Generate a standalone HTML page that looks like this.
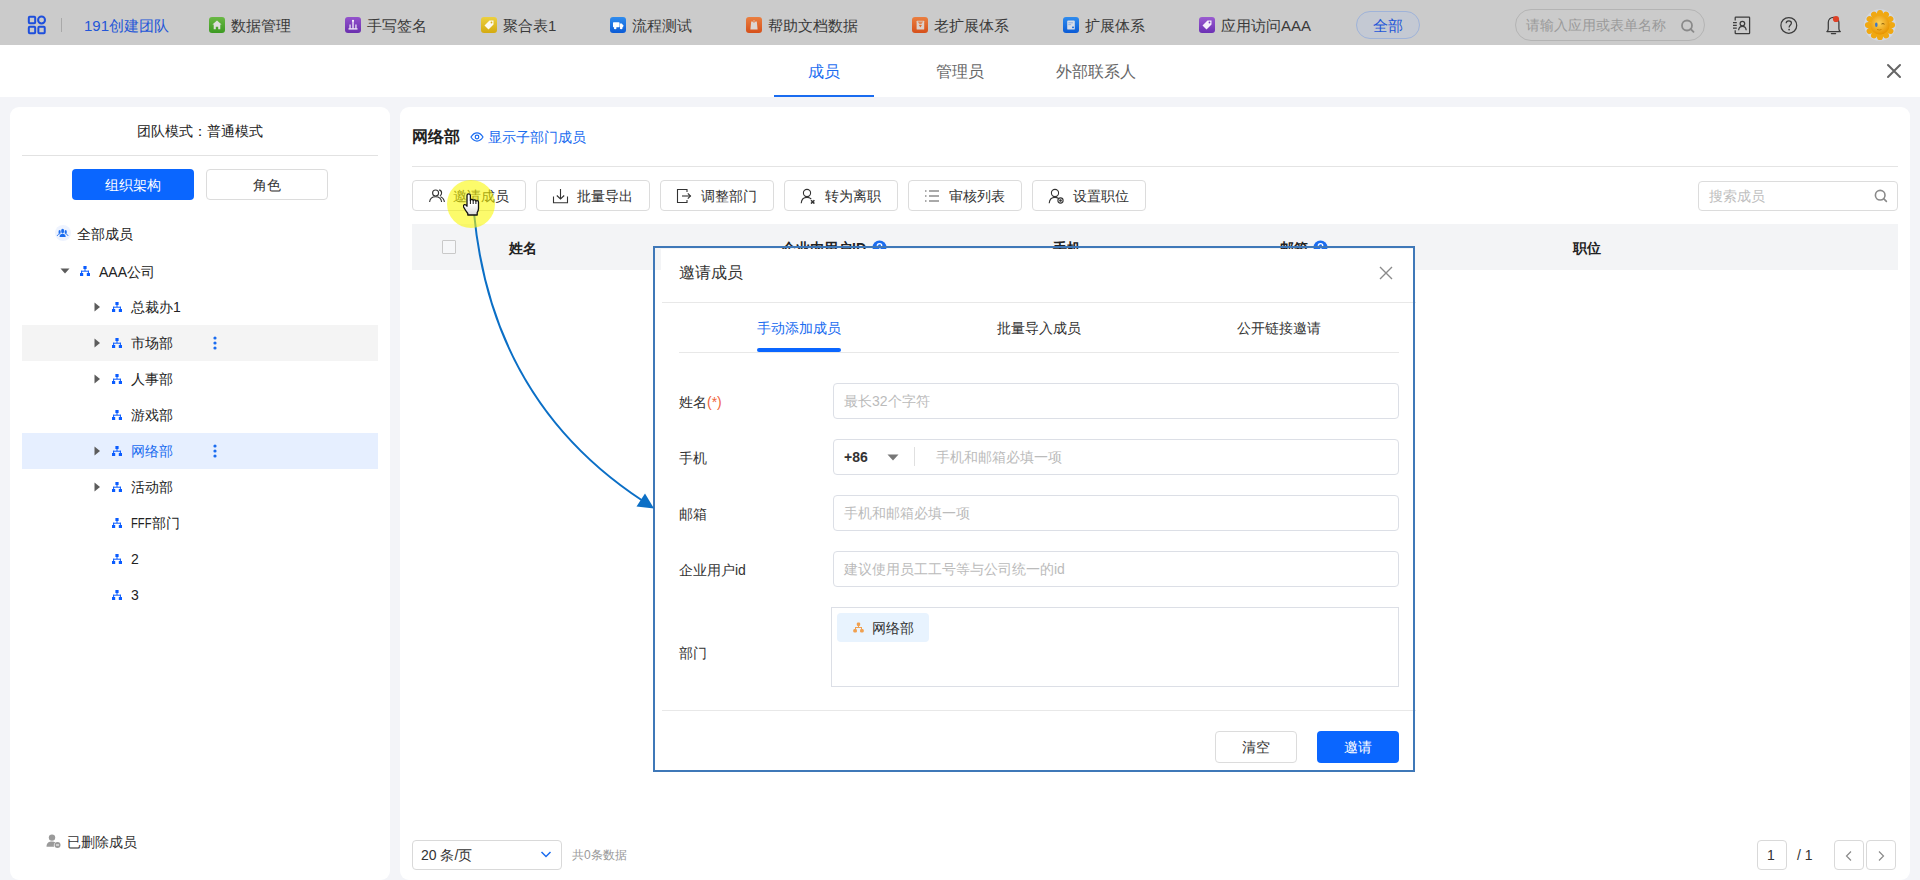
<!DOCTYPE html>
<html><head><meta charset="utf-8">
<style>
*{box-sizing:border-box;margin:0;padding:0}
html,body{width:1920px;height:880px;overflow:hidden}
body{position:relative;background:#f3f4f8;font-family:"Liberation Sans",sans-serif;font-size:14px;color:#333}
.a{position:absolute;white-space:nowrap}
.t{position:absolute;white-space:nowrap;line-height:20px;height:20px}
#hdr{position:absolute;left:0;top:0;width:1920px;height:45px;background:#cbcbcb}
#band{position:absolute;left:0;top:45px;width:1920px;height:52px;background:#fff}
.appicon{position:absolute;top:17px;width:16px;height:16px;border-radius:3px}
.apptxt{position:absolute;top:16px;font-size:15px;line-height:20px;color:#3a3a3a}
.panel{position:absolute;background:#fff;border-radius:9px}
.btn{position:absolute;border:1px solid #dcdcdc;border-radius:4px;background:#fff}
.tree{position:absolute;font-size:14px;color:#222;line-height:20px}
.inp{position:absolute;border:1px solid #dcdfe6;border-radius:4px;background:#fff}
.ph{position:absolute;color:#bbb;font-size:14px;line-height:20px}
.lbl{position:absolute;color:#333;font-size:14px;line-height:20px}
</style></head><body>

<!-- HEADER -->
<div id="hdr"></div>
<svg class="a" style="left:26.5px;top:15px" width="20" height="20" viewBox="0 0 22 22">
  <g fill="none" stroke="#1e4fdc" stroke-width="2.2">
    <rect x="2" y="2" width="7" height="7" rx="1"/>
    <circle cx="16" cy="5.5" r="3.8"/>
    <rect x="2" y="13" width="7" height="7" rx="1"/>
    <rect x="12.5" y="13" width="7" height="7" rx="1"/>
  </g>
</svg>
<div class="a" style="left:61px;top:18px;width:1px;height:14px;background:#a9a9a9"></div>
<div class="apptxt" style="left:84px;color:#2356d8">191创建团队</div>

<svg class="a" style="left:209px;top:17px" width="16" height="16" viewBox="0 0 16 16"><defs><linearGradient id="g0" x1="0" y1="0" x2="0" y2="1"><stop offset="0" stop-color="#6ab845"/><stop offset="1" stop-color="#3c9a22"/></linearGradient></defs><rect width="16" height="16" rx="3" fill="url(#g0)"/><path d="M8 3.4 L12.6 7.6 L11.3 7.6 L11.3 12.2 L9.2 12.2 L9.2 9.8 L6.8 9.8 L6.8 12.2 L4.7 12.2 L4.7 7.6 L3.4 7.6 Z" fill="#dedede"/></svg>
<svg class="a" style="left:345px;top:17px" width="16" height="16" viewBox="0 0 16 16"><defs><linearGradient id="g1" x1="0" y1="0" x2="0" y2="1"><stop offset="0" stop-color="#9352cc"/><stop offset="1" stop-color="#6a2fae"/></linearGradient></defs><rect width="16" height="16" rx="3" fill="url(#g1)"/><g fill="#fff"><rect x="7.4" y="3.5" width="1.2" height="8"/><rect x="4.5" y="7.5" width="1.1" height="4"/><rect x="10.4" y="7.5" width="1.1" height="4"/><rect x="3.5" y="11.3" width="9" height="1.2"/><circle cx="8" cy="3.8" r="1"/></g></svg>
<svg class="a" style="left:481px;top:17px" width="16" height="16" viewBox="0 0 16 16"><defs><linearGradient id="g2" x1="0" y1="0" x2="0" y2="1"><stop offset="0" stop-color="#ecd040"/><stop offset="1" stop-color="#d4aa10"/></linearGradient></defs><rect width="16" height="16" rx="3" fill="url(#g2)"/><path d="M3.5 8.5 L8.5 3.5 L12.5 3.5 L12.5 7.5 L7.5 12.5 Z" fill="#fff" opacity="0.92"/><circle cx="10.5" cy="5.5" r="0.9" fill="#d8b020"/></svg>
<svg class="a" style="left:610px;top:17px" width="16" height="16" viewBox="0 0 16 16"><defs><linearGradient id="g3" x1="0" y1="0" x2="0" y2="1"><stop offset="0" stop-color="#2f8cee"/><stop offset="1" stop-color="#0b5bd6"/></linearGradient></defs><rect width="16" height="16" rx="3" fill="url(#g3)"/><g fill="#fff"><rect x="3" y="5.2" width="6.5" height="5" rx="0.6"/><path d="M9.8 6.5 L11.8 6.5 L13.2 8.3 L13.2 10.2 L9.8 10.2 Z"/><circle cx="5.2" cy="11" r="1.3"/><circle cx="11.2" cy="11" r="1.3"/></g></svg>
<svg class="a" style="left:746px;top:17px" width="16" height="16" viewBox="0 0 16 16"><defs><linearGradient id="g4" x1="0" y1="0" x2="0" y2="1"><stop offset="0" stop-color="#ea7f40"/><stop offset="1" stop-color="#d6501a"/></linearGradient></defs><rect width="16" height="16" rx="3" fill="url(#g4)"/><path d="M5.2 4.6 L6.5 4.6 C6.8 5.3 7.3 5.6 8 5.6 C8.7 5.6 9.2 5.3 9.5 4.6 L10.8 4.6 L11.6 12.4 L4.4 12.4 Z" fill="#dcd6d2"/><circle cx="8" cy="3.9" r="0.7" fill="#dcd6d2"/></svg>
<svg class="a" style="left:912px;top:17px" width="16" height="16" viewBox="0 0 16 16"><defs><linearGradient id="g5" x1="0" y1="0" x2="0" y2="1"><stop offset="0" stop-color="#ea7f40"/><stop offset="1" stop-color="#d6501a"/></linearGradient></defs><rect width="16" height="16" rx="3" fill="url(#g5)"/><rect x="4.6" y="3.8" width="7.6" height="8.6" rx="0.5" fill="#dcd2cc"/><path d="M5.6 4.4 L11.2 4.4 L9.2 7.2 L7.6 7.2 Z" fill="#e08a5a"/><path d="M6.9 8 L9.9 8 L8.4 10.6 Z" fill="#e06a2c"/></svg>
<svg class="a" style="left:1063px;top:17px" width="16" height="16" viewBox="0 0 16 16"><defs><linearGradient id="g6" x1="0" y1="0" x2="0" y2="1"><stop offset="0" stop-color="#2f8cee"/><stop offset="1" stop-color="#0b5bd6"/></linearGradient></defs><rect width="16" height="16" rx="3" fill="url(#g6)"/><rect x="4.2" y="3.6" width="7.6" height="9" rx="0.9" fill="#d8dde6"/><g fill="#8fb0e0"><rect x="5.3" y="5.3" width="4.8" height="1"/><rect x="5.3" y="7.2" width="2.8" height="0.9"/></g><rect x="9" y="9.6" width="2" height="1.5" fill="#2e7ae0"/></svg>
<svg class="a" style="left:1199px;top:17px" width="16" height="16" viewBox="0 0 16 16"><defs><linearGradient id="g7" x1="0" y1="0" x2="0" y2="1"><stop offset="0" stop-color="#9a5cd0"/><stop offset="1" stop-color="#6b30b4"/></linearGradient></defs><rect width="16" height="16" rx="3" fill="url(#g7)"/><path d="M3.5 8.5 L8.5 3.5 L12.5 3.5 L12.5 7.5 L7.5 12.5 Z" fill="#fff" opacity="0.92"/><circle cx="10.5" cy="5.5" r="0.9" fill="#7a40c0"/></svg>
<div class="apptxt" style="left:231px">数据管理</div>
<div class="apptxt" style="left:367px">手写签名</div>
<div class="apptxt" style="left:503px">聚合表1</div>
<div class="apptxt" style="left:632px">流程测试</div>
<div class="apptxt" style="left:768px">帮助文档数据</div>
<div class="apptxt" style="left:934px">老扩展体系</div>
<div class="apptxt" style="left:1085px">扩展体系</div>
<div class="apptxt" style="left:1221px">应用访问AAA</div>

<div class="a" style="left:1356px;top:11px;width:64px;height:28px;border-radius:14px;background:#c4c9d3;border:1px solid #9fb3d9"></div>
<div class="apptxt" style="left:1373px;color:#2356d8">全部</div>

<div class="a" style="left:1515px;top:9px;width:190px;height:32px;border-radius:16px;border:1px solid #b4b4b4"></div>
<div class="a" style="left:1526px;top:15px;font-size:14px;line-height:20px;color:#9a9a9a">请输入应用或表单名称</div>


<svg class="a" style="left:1680px;top:19px" width="16" height="14" viewBox="0 0 16 14">
  <circle cx="7" cy="6.5" r="5" fill="none" stroke="#8a8a8a" stroke-width="1.8"/>
  <line x1="10.6" y1="10" x2="13.5" y2="12.8" stroke="#8a8a8a" stroke-width="1.8" stroke-linecap="round"/>
</svg>
<!-- contacts icon -->
<svg class="a" style="left:1728px;top:12px" width="24" height="24" viewBox="0 0 24 24">
<g fill="none" stroke="#3c3c3c" stroke-width="1.25">
<path d="M7.2 8.6 L7.2 5.8 Q7.2 5.1 7.9 5.1 L21 5.1 Q21.6 5.1 21.6 5.8 L21.6 20.9 Q21.6 21.6 21 21.6 L7.9 21.6 Q7.2 21.6 7.2 20.9 L7.2 18.2"/>
<path d="M5 10.6 L8.8 10.6 M5 13.3 L8.8 13.3 M5 16 L8.8 16"/>
<circle cx="14.4" cy="11.6" r="2.3"/>
<path d="M10.6 18.2 C10.9 15.5 12.4 14.4 14.4 14.4 C16.4 14.4 17.9 15.5 18.2 18.2"/>
</g></svg>
<!-- help -->
<svg class="a" style="left:1776px;top:12px" width="26" height="26" viewBox="0 0 26 26">
<circle cx="12.8" cy="13.4" r="7.9" fill="none" stroke="#3c3c3c" stroke-width="1.25"/>
<path d="M10.2 11.2 C10.2 9.7 11.3 8.9 12.8 8.9 C14.3 8.9 15.4 9.8 15.4 11.1 C15.4 12.9 13.1 13.2 13.1 15.5" fill="none" stroke="#3c3c3c" stroke-width="1.25"/>
<circle cx="13.1" cy="17.6" r="0.85" fill="#3c3c3c"/>
</svg>
<!-- bell -->
<svg class="a" style="left:1820px;top:10px" width="24" height="26" viewBox="0 0 24 26">
<g fill="none" stroke="#3c3c3c" stroke-width="1.25" stroke-linecap="round">
<path d="M6.9 21.6 L20.3 21.6"/>
<path d="M7.4 21.2 C8 20.4 8.3 19.6 8.3 18.4 L8.3 12.6 C8.3 9.4 10.6 7.4 13.6 7.4 C16.6 7.4 18.9 9.4 18.9 12.6 L18.9 18.4 C18.9 19.6 19.2 20.4 19.8 21.2"/>
<path d="M11.4 23.6 L15.6 23.6"/>
</g>
<circle cx="16" cy="9" r="3.1" fill="#de4228"/>
</svg>
<!-- avatar -->
<svg class="a" style="left:1864px;top:9px" width="32" height="32" viewBox="0 0 32 32">
<defs><radialGradient id="face" cx="0.45" cy="0.4" r="0.6"><stop offset="0" stop-color="#fcd25a"/><stop offset="1" stop-color="#e89400"/></radialGradient></defs>
<circle cx="16" cy="16" r="15.8" fill="#d3d8e2"/>
<g fill="#f0a812"><ellipse cx="27.20" cy="16.00" rx="3.9" ry="3.1" transform="rotate(0 27.20 16.00)"/><ellipse cx="25.70" cy="21.60" rx="3.9" ry="3.1" transform="rotate(30 25.70 21.60)"/><ellipse cx="21.60" cy="25.70" rx="3.9" ry="3.1" transform="rotate(60 21.60 25.70)"/><ellipse cx="16.00" cy="27.20" rx="3.9" ry="3.1" transform="rotate(90 16.00 27.20)"/><ellipse cx="10.40" cy="25.70" rx="3.9" ry="3.1" transform="rotate(120 10.40 25.70)"/><ellipse cx="6.30" cy="21.60" rx="3.9" ry="3.1" transform="rotate(150 6.30 21.60)"/><ellipse cx="4.80" cy="16.00" rx="3.9" ry="3.1" transform="rotate(180 4.80 16.00)"/><ellipse cx="6.30" cy="10.40" rx="3.9" ry="3.1" transform="rotate(210 6.30 10.40)"/><ellipse cx="10.40" cy="6.30" rx="3.9" ry="3.1" transform="rotate(240 10.40 6.30)"/><ellipse cx="16.00" cy="4.80" rx="3.9" ry="3.1" transform="rotate(270 16.00 4.80)"/><ellipse cx="21.60" cy="6.30" rx="3.9" ry="3.1" transform="rotate(300 21.60 6.30)"/><ellipse cx="25.70" cy="10.40" rx="3.9" ry="3.1" transform="rotate(330 25.70 10.40)"/></g>
<circle cx="16" cy="16" r="9.5" fill="url(#face)"/>
<ellipse cx="12.3" cy="15.8" rx="1.3" ry="2.2" fill="#3d78c8"/>
<path d="M17.5 15 Q19 14 20.5 15.2" stroke="#7a5000" stroke-width="0.9" fill="none"/>
<path d="M13 20.5 Q15.5 21.5 17.5 20.5" stroke="#c07a00" stroke-width="0.8" fill="none"/>
</svg>

<!-- BAND -->
<div id="band"></div>
<div class="a" style="left:808px;top:61px;font-size:16px;line-height:22px;color:#1a6cf0">成员</div>
<div class="a" style="left:774px;top:95px;width:100px;height:2px;background:#1a6cf0"></div>
<div class="a" style="left:936px;top:61px;font-size:16px;line-height:22px;color:#666">管理员</div>
<div class="a" style="left:1056px;top:61px;font-size:16px;line-height:22px;color:#666">外部联系人</div>
<svg class="a" style="left:1886px;top:63px" width="16" height="16" viewBox="0 0 16 16">
  <path d="M2 2 L14 14 M14 2 L2 14" stroke="#666" stroke-width="2" stroke-linecap="round"/>
</svg>


<!-- LEFT PANEL -->
<div class="panel" style="left:10px;top:107px;width:380px;height:773px"></div>
<div class="t" style="left:137px;top:121px;color:#222">团队模式：普通模式</div>
<div class="a" style="left:22px;top:155px;width:356px;height:1px;background:#e2e2e2"></div>
<div class="a" style="left:72px;top:169px;width:122px;height:31px;border-radius:4px;background:#0a66ff"></div>
<div class="t" style="left:105px;top:175px;color:#fff">组织架构</div>
<div class="btn" style="left:206px;top:169px;width:122px;height:31px"></div>
<div class="t" style="left:253px;top:175px;color:#333">角色</div>

<svg class="a" style="left:55px;top:225px" width="16" height="16" viewBox="0 0 16 16">
<circle cx="8" cy="8" r="8" fill="#eef3fe"/>
<g fill="#1a6cf0"><ellipse cx="7.6" cy="6.1" rx="1.5" ry="2.3"/><path d="M4.5 11.9 C4.6 9.6 5.9 8.7 7.6 8.7 C9.3 8.7 10.6 9.6 10.7 11.9 Z"/>
<ellipse cx="4.6" cy="6.9" rx="1.1" ry="1.9"/><ellipse cx="10.7" cy="6.9" rx="1.1" ry="1.9"/></g>
<g fill="none" stroke="#1a6cf0" stroke-width="1" stroke-linecap="round"><path d="M2.4 10.4 C2.8 9.5 3.5 9.1 4.3 9"/><path d="M12.9 10.4 C12.5 9.5 11.8 9.1 11 9"/></g>
</svg>
<div class="tree" style="left:77px;top:224px">全部成员</div>
<svg class="a" style="left:60px;top:268px" width="10" height="6" viewBox="0 0 10 6"><path d="M0.5 0.5 L9.5 0.5 L5 5.5 Z" fill="#5c5c5c"/></svg><svg class="a" style="left:80px;top:266px" width="10" height="10" viewBox="0 0 10 10"><g fill="#0a5cff"><rect x="3.4" y="0" width="3.2" height="3"/><rect x="0" y="7" width="3.2" height="3"/><rect x="6.8" y="7" width="3.2" height="3"/><rect x="4.5" y="3" width="1" height="2"/><rect x="1.1" y="4.7" width="7.8" height="1"/><rect x="1.1" y="4.7" width="1" height="2.4"/><rect x="7.9" y="4.7" width="1" height="2.4"/></g></svg>
<div class="tree" style="left:99px;top:262px">AAA公司</div>
<div class="a" style="left:22px;top:325px;width:356px;height:36px;background:#f4f4f4"></div>
<div class="a" style="left:22px;top:433px;width:356px;height:36px;background:#e6efff"></div>
<svg class="a" style="left:94px;top:302px" width="7" height="10" viewBox="0 0 7 10"><path d="M0.5 0.5 L6 5 L0.5 9.5 Z" fill="#5c5c5c"/></svg><svg class="a" style="left:112px;top:302px" width="10" height="10" viewBox="0 0 10 10"><g fill="#0a5cff"><rect x="3.4" y="0" width="3.2" height="3"/><rect x="0" y="7" width="3.2" height="3"/><rect x="6.8" y="7" width="3.2" height="3"/><rect x="4.5" y="3" width="1" height="2"/><rect x="1.1" y="4.7" width="7.8" height="1"/><rect x="1.1" y="4.7" width="1" height="2.4"/><rect x="7.9" y="4.7" width="1" height="2.4"/></g></svg><div class="tree" style="left:131px;top:297px;color:#222">总裁办1</div>
<svg class="a" style="left:94px;top:338px" width="7" height="10" viewBox="0 0 7 10"><path d="M0.5 0.5 L6 5 L0.5 9.5 Z" fill="#5c5c5c"/></svg><svg class="a" style="left:112px;top:338px" width="10" height="10" viewBox="0 0 10 10"><g fill="#0a5cff"><rect x="3.4" y="0" width="3.2" height="3"/><rect x="0" y="7" width="3.2" height="3"/><rect x="6.8" y="7" width="3.2" height="3"/><rect x="4.5" y="3" width="1" height="2"/><rect x="1.1" y="4.7" width="7.8" height="1"/><rect x="1.1" y="4.7" width="1" height="2.4"/><rect x="7.9" y="4.7" width="1" height="2.4"/></g></svg><div class="tree" style="left:131px;top:333px;color:#222">市场部</div>
<svg class="a" style="left:213px;top:336px" width="4" height="14" viewBox="0 0 4 14"><g fill="#1a6cf0"><circle cx="2" cy="2" r="1.6"/><circle cx="2" cy="7" r="1.6"/><circle cx="2" cy="12" r="1.6"/></g></svg><svg class="a" style="left:94px;top:374px" width="7" height="10" viewBox="0 0 7 10"><path d="M0.5 0.5 L6 5 L0.5 9.5 Z" fill="#5c5c5c"/></svg><svg class="a" style="left:112px;top:374px" width="10" height="10" viewBox="0 0 10 10"><g fill="#0a5cff"><rect x="3.4" y="0" width="3.2" height="3"/><rect x="0" y="7" width="3.2" height="3"/><rect x="6.8" y="7" width="3.2" height="3"/><rect x="4.5" y="3" width="1" height="2"/><rect x="1.1" y="4.7" width="7.8" height="1"/><rect x="1.1" y="4.7" width="1" height="2.4"/><rect x="7.9" y="4.7" width="1" height="2.4"/></g></svg><div class="tree" style="left:131px;top:369px;color:#222">人事部</div>
<svg class="a" style="left:112px;top:410px" width="10" height="10" viewBox="0 0 10 10"><g fill="#0a5cff"><rect x="3.4" y="0" width="3.2" height="3"/><rect x="0" y="7" width="3.2" height="3"/><rect x="6.8" y="7" width="3.2" height="3"/><rect x="4.5" y="3" width="1" height="2"/><rect x="1.1" y="4.7" width="7.8" height="1"/><rect x="1.1" y="4.7" width="1" height="2.4"/><rect x="7.9" y="4.7" width="1" height="2.4"/></g></svg><div class="tree" style="left:131px;top:405px;color:#222">游戏部</div>
<svg class="a" style="left:94px;top:446px" width="7" height="10" viewBox="0 0 7 10"><path d="M0.5 0.5 L6 5 L0.5 9.5 Z" fill="#5c5c5c"/></svg><svg class="a" style="left:112px;top:446px" width="10" height="10" viewBox="0 0 10 10"><g fill="#0a5cff"><rect x="3.4" y="0" width="3.2" height="3"/><rect x="0" y="7" width="3.2" height="3"/><rect x="6.8" y="7" width="3.2" height="3"/><rect x="4.5" y="3" width="1" height="2"/><rect x="1.1" y="4.7" width="7.8" height="1"/><rect x="1.1" y="4.7" width="1" height="2.4"/><rect x="7.9" y="4.7" width="1" height="2.4"/></g></svg><div class="tree" style="left:131px;top:441px;color:#1a6cf0">网络部</div>
<svg class="a" style="left:213px;top:444px" width="4" height="14" viewBox="0 0 4 14"><g fill="#1a6cf0"><circle cx="2" cy="2" r="1.6"/><circle cx="2" cy="7" r="1.6"/><circle cx="2" cy="12" r="1.6"/></g></svg><svg class="a" style="left:94px;top:482px" width="7" height="10" viewBox="0 0 7 10"><path d="M0.5 0.5 L6 5 L0.5 9.5 Z" fill="#5c5c5c"/></svg><svg class="a" style="left:112px;top:482px" width="10" height="10" viewBox="0 0 10 10"><g fill="#0a5cff"><rect x="3.4" y="0" width="3.2" height="3"/><rect x="0" y="7" width="3.2" height="3"/><rect x="6.8" y="7" width="3.2" height="3"/><rect x="4.5" y="3" width="1" height="2"/><rect x="1.1" y="4.7" width="7.8" height="1"/><rect x="1.1" y="4.7" width="1" height="2.4"/><rect x="7.9" y="4.7" width="1" height="2.4"/></g></svg><div class="tree" style="left:131px;top:477px;color:#222">活动部</div>
<svg class="a" style="left:112px;top:518px" width="10" height="10" viewBox="0 0 10 10"><g fill="#0a5cff"><rect x="3.4" y="0" width="3.2" height="3"/><rect x="0" y="7" width="3.2" height="3"/><rect x="6.8" y="7" width="3.2" height="3"/><rect x="4.5" y="3" width="1" height="2"/><rect x="1.1" y="4.7" width="7.8" height="1"/><rect x="1.1" y="4.7" width="1" height="2.4"/><rect x="7.9" y="4.7" width="1" height="2.4"/></g></svg><div class="tree" style="left:131px;top:513px;color:#222"><span style="display:inline-block;width:21px;vertical-align:top"><span style="display:inline-block;transform:scaleX(0.8);transform-origin:0 0">FFF</span></span>部门</div>
<svg class="a" style="left:112px;top:554px" width="10" height="10" viewBox="0 0 10 10"><g fill="#0a5cff"><rect x="3.4" y="0" width="3.2" height="3"/><rect x="0" y="7" width="3.2" height="3"/><rect x="6.8" y="7" width="3.2" height="3"/><rect x="4.5" y="3" width="1" height="2"/><rect x="1.1" y="4.7" width="7.8" height="1"/><rect x="1.1" y="4.7" width="1" height="2.4"/><rect x="7.9" y="4.7" width="1" height="2.4"/></g></svg><div class="tree" style="left:131px;top:549px;color:#222">2</div>
<svg class="a" style="left:112px;top:590px" width="10" height="10" viewBox="0 0 10 10"><g fill="#0a5cff"><rect x="3.4" y="0" width="3.2" height="3"/><rect x="0" y="7" width="3.2" height="3"/><rect x="6.8" y="7" width="3.2" height="3"/><rect x="4.5" y="3" width="1" height="2"/><rect x="1.1" y="4.7" width="7.8" height="1"/><rect x="1.1" y="4.7" width="1" height="2.4"/><rect x="7.9" y="4.7" width="1" height="2.4"/></g></svg><div class="tree" style="left:131px;top:585px;color:#222">3</div>

<svg class="a" style="left:46px;top:834px" width="15" height="14" viewBox="0 0 15 14">
<g fill="#9a9a9a"><circle cx="6" cy="3.6" r="3.2"/><path d="M0.5 12.8 C0.8 8.6 3 7.6 6 7.6 C7.5 7.6 8.6 7.9 9.3 8.4 C8.2 9.2 7.8 10.3 7.8 11.3 C7.8 11.9 7.9 12.4 8.2 12.8 Z"/>
<circle cx="11.5" cy="11" r="3"/></g><rect x="10" y="10.5" width="3" height="1" fill="#fff"/>
</svg>
<div class="tree" style="left:67px;top:832px;color:#333">已删除成员</div>


<!-- RIGHT PANEL -->
<div class="panel" style="left:400px;top:107px;width:1510px;height:773px"></div>
<div class="a" style="left:412px;top:126px;font-size:16px;line-height:22px;color:#222;font-weight:bold">网络部</div>
<svg class="a" style="left:470px;top:132px" width="14" height="10" viewBox="0 0 14 10">
<path d="M1 5 C3 1.8 5 0.9 7 0.9 C9 0.9 11 1.8 13 5 C11 8.2 9 9.1 7 9.1 C5 9.1 3 8.2 1 5 Z" fill="none" stroke="#1a6cf0" stroke-width="1.2"/>
<circle cx="7" cy="5" r="1.8" fill="none" stroke="#1a6cf0" stroke-width="1.2"/></svg>
<div class="t" style="left:488px;top:127px;color:#1a6cf0">显示子部门成员</div>
<div class="a" style="left:412px;top:166px;width:1486px;height:1px;background:#e4e4e4"></div>
<div class="btn" style="left:412px;top:180px;width:114px;height:31px"></div>
<svg class="a" style="left:428px;top:188px" width="17" height="16" viewBox="0 0 17 16"><g fill="none" stroke="#333" stroke-width="1.1"><circle cx="7.6" cy="5" r="3"/><path d="M1.6 14 C1.9 10.6 4.2 8.8 7.6 8.8 C11 8.8 13.3 10.6 13.6 14"/><path d="M11.2 1.9 C12.6 2.3 13.6 3.5 13.6 5 C13.6 6.3 12.9 7.3 11.9 7.8"/><path d="M12.5 8.7 C14.6 9.5 16.1 11.4 16.4 14"/></g></svg>
<div class="t" style="left:453px;top:186px;color:#333">邀请成员</div>
<div class="btn" style="left:536px;top:180px;width:114px;height:31px"></div>
<svg class="a" style="left:552px;top:188px" width="17" height="16" viewBox="0 0 17 16"><g fill="none" stroke="#333" stroke-width="1.1"><path d="M1.5 8.5 L1.5 14.8 L15.5 14.8 L15.5 8.5"/><path d="M8.5 1 L8.5 11"/><path d="M4.8 7.5 L8.5 11 L12.2 7.5"/></g></svg>
<div class="t" style="left:577px;top:186px;color:#333">批量导出</div>
<div class="btn" style="left:660px;top:180px;width:114px;height:31px"></div>
<svg class="a" style="left:676px;top:188px" width="17" height="16" viewBox="0 0 17 16"><g fill="none" stroke="#333" stroke-width="1.1"><path d="M11 4 L11 1.5 L1.5 1.5 L1.5 14.5 L11 14.5 L11 12"/><path d="M6 8 L14.5 8"/><path d="M11.8 5.3 L14.5 8 L11.8 10.7"/></g></svg>
<div class="t" style="left:701px;top:186px;color:#333">调整部门</div>
<div class="btn" style="left:784px;top:180px;width:114px;height:31px"></div>
<svg class="a" style="left:800px;top:188px" width="17" height="16" viewBox="0 0 17 16"><g fill="none" stroke="#333" stroke-width="1.1"><circle cx="7" cy="5" r="3.6"/><path d="M1.2 15.2 C1.6 11 4 9.4 7 9.4 C8.8 9.4 10.2 10 11.2 11"/><path d="M11 12.2 L14.4 15.6 M14.4 12.2 L11 15.6" stroke-width="1.5"/></g></svg>
<div class="t" style="left:825px;top:186px;color:#333">转为离职</div>
<div class="btn" style="left:908px;top:180px;width:114px;height:31px"></div>
<svg class="a" style="left:924px;top:188px" width="17" height="16" viewBox="0 0 17 16"><g fill="none" stroke="#555" stroke-width="1.2"><path d="M1 3 L2.5 3 M1 8 L2.5 8 M1 13 L2.5 13"/><path d="M5 3 L15 3 M5 8 L15 8 M5 13 L15 13"/></g></svg>
<div class="t" style="left:949px;top:186px;color:#333">审核列表</div>
<div class="btn" style="left:1032px;top:180px;width:114px;height:31px"></div>
<svg class="a" style="left:1048px;top:188px" width="17" height="16" viewBox="0 0 17 16"><g fill="none" stroke="#333" stroke-width="1.1"><circle cx="7" cy="5" r="3.6"/><path d="M1.2 15.2 C1.6 11 4 9.4 7 9.4 C8.2 9.4 9.3 9.6 10.2 10.2"/><circle cx="12.5" cy="12.5" r="2.6"/><circle cx="12.5" cy="12.5" r="0.8" fill="#3a3a3a"/></g></svg>
<div class="t" style="left:1073px;top:186px;color:#333">设置职位</div>

<div class="inp" style="left:1698px;top:181px;width:200px;height:30px;border-color:#dcdcdc"></div>
<div class="ph" style="left:1709px;top:186px;color:#c0c0c0">搜索成员</div>
<svg class="a" style="left:1874px;top:189px" width="14" height="14" viewBox="0 0 14 14">
<circle cx="6.2" cy="6.2" r="4.8" fill="none" stroke="#8a8a8a" stroke-width="1.6"/>
<line x1="9.6" y1="9.6" x2="12.4" y2="12.4" stroke="#8a8a8a" stroke-width="1.6" stroke-linecap="round"/></svg>

<div class="a" style="left:412px;top:224px;width:1486px;height:46px;background:#f3f4f6"></div>
<div class="a" style="left:442px;top:240px;width:14px;height:14px;border:1px solid #c9c9c9;border-radius:1px;background:#f6f7f9"></div>
<div class="t" style="left:509px;top:238px;font-weight:bold;color:#222">姓名</div>
<div class="t" style="left:782px;top:238px;font-weight:bold;color:#222">企业内用户ID</div>
<svg class="a" style="left:872px;top:240px" width="15" height="15" viewBox="0 0 15 15"><circle cx="7.5" cy="7.5" r="7" fill="#1a6cf0"/><path d="M5.3 5.8 C5.3 4.4 6.3 3.6 7.5 3.6 C8.8 3.6 9.7 4.4 9.7 5.5 C9.7 7 7.8 7.2 7.8 8.8" fill="none" stroke="#fff" stroke-width="1.4"/><circle cx="7.8" cy="11" r="0.9" fill="#fff"/></svg>
<div class="t" style="left:1053px;top:238px;font-weight:bold;color:#222">手机</div>
<div class="t" style="left:1280px;top:238px;font-weight:bold;color:#222">邮箱</div>
<svg class="a" style="left:1313px;top:240px" width="15" height="15" viewBox="0 0 15 15"><circle cx="7.5" cy="7.5" r="7" fill="#1a6cf0"/><path d="M5.3 5.8 C5.3 4.4 6.3 3.6 7.5 3.6 C8.8 3.6 9.7 4.4 9.7 5.5 C9.7 7 7.8 7.2 7.8 8.8" fill="none" stroke="#fff" stroke-width="1.4"/><circle cx="7.8" cy="11" r="0.9" fill="#fff"/></svg>
<div class="t" style="left:1573px;top:238px;font-weight:bold;color:#222">职位</div>

<!-- pagination -->
<div class="inp" style="left:412px;top:840px;width:150px;height:30px;border-color:#d9d9d9"></div>
<div class="t" style="left:421px;top:845px;color:#333">20 条/页</div>
<svg class="a" style="left:540px;top:850px" width="12" height="9" viewBox="0 0 12 9"><path d="M1.5 2 L6 6.5 L10.5 2" fill="none" stroke="#1a6cf0" stroke-width="1.5"/></svg>
<div class="a" style="left:572px;top:846px;font-size:12px;line-height:18px;color:#999">共0条数据</div>
<div class="inp" style="left:1757px;top:840px;width:30px;height:30px;border-color:#d9d9d9"></div>
<div class="t" style="left:1767px;top:845px;color:#333">1</div>
<div class="t" style="left:1797px;top:845px;color:#333">/ 1</div>
<div class="inp" style="left:1834px;top:840px;width:30px;height:30px;border-color:#d9d9d9"></div>
<svg class="a" style="left:1843px;top:850px" width="12" height="12" viewBox="0 0 12 12"><path d="M8 1.5 L3.5 6 L8 10.5" fill="none" stroke="#8a8a8a" stroke-width="1.2"/></svg>
<div class="inp" style="left:1866px;top:840px;width:30px;height:30px;border-color:#d9d9d9"></div>
<svg class="a" style="left:1875px;top:850px" width="12" height="12" viewBox="0 0 12 12"><path d="M4 1.5 L8.5 6 L4 10.5" fill="none" stroke="#8a8a8a" stroke-width="1.2"/></svg>


<!-- MODAL -->
<div class="a" style="left:661px;top:249px;width:752px;height:521px;background:#fff"></div>
<div class="a" style="left:679px;top:262px;font-size:16px;line-height:22px;color:#333">邀请成员</div>
<svg class="a" style="left:1379px;top:266px" width="14" height="14" viewBox="0 0 14 14"><path d="M1 1 L13 13 M13 1 L1 13" stroke="#8a8a8a" stroke-width="1.4"/></svg>
<div class="a" style="left:662px;top:302px;width:754px;height:1px;background:#e8e8e8"></div>

<div class="t" style="left:757px;top:318px;color:#1a6cf0">手动添加成员</div>
<div class="a" style="left:757px;top:348px;width:84px;height:4px;border-radius:2px;background:#0a66ff"></div>
<div class="t" style="left:997px;top:318px;color:#333">批量导入成员</div>
<div class="t" style="left:1237px;top:318px;color:#333">公开链接邀请</div>
<div class="a" style="left:679px;top:352px;width:720px;height:1px;background:#e8e8e8"></div>

<div class="lbl" style="left:679px;top:392px">姓名<span style="color:#f0643c">(*)</span></div>
<div class="inp" style="left:833px;top:383px;width:566px;height:36px"></div>
<div class="ph" style="left:844px;top:391px">最长32个字符</div>

<div class="lbl" style="left:679px;top:448px">手机</div>
<div class="inp" style="left:833px;top:439px;width:566px;height:36px"></div>
<div class="t" style="left:844px;top:447px;color:#333;font-weight:bold">+86</div>
<svg class="a" style="left:887px;top:454px" width="12" height="7" viewBox="0 0 12 7"><path d="M0.5 0.5 L11.5 0.5 L6 6.5 Z" fill="#777"/></svg>
<div class="a" style="left:914px;top:447px;width:1px;height:19px;background:#e0e0e0"></div>
<div class="ph" style="left:936px;top:447px">手机和邮箱必填一项</div>

<div class="lbl" style="left:679px;top:504px">邮箱</div>
<div class="inp" style="left:833px;top:495px;width:566px;height:36px"></div>
<div class="ph" style="left:844px;top:503px">手机和邮箱必填一项</div>

<div class="lbl" style="left:679px;top:560px">企业用户id</div>
<div class="inp" style="left:833px;top:551px;width:566px;height:36px"></div>
<div class="ph" style="left:844px;top:559px">建议使用员工工号等与公司统一的id</div>

<div class="lbl" style="left:679px;top:643px">部门</div>
<div class="inp" style="left:831px;top:607px;width:568px;height:80px;border-radius:0"></div>
<div class="a" style="left:837px;top:613px;width:92px;height:29px;border-radius:4px;background:#e8f3fe"></div>
<svg class="a" style="left:853px;top:622px" width="11" height="11" viewBox="0 0 11 11"><g fill="#f0a050"><rect x="3.8" y="0.5" width="3.4" height="3.4" rx="1.2"/><rect x="0.3" y="7" width="3.6" height="3.4" rx="1.2"/><rect x="7.1" y="7" width="3.6" height="3.4" rx="1.2"/><rect x="5" y="3.5" width="1" height="2"/><rect x="2" y="5" width="7" height="1"/><rect x="2" y="5" width="1" height="2.2"/><rect x="8" y="5" width="1" height="2.2"/></g></svg>
<div class="t" style="left:872px;top:618px;color:#333">网络部</div>

<div class="a" style="left:662px;top:710px;width:754px;height:1px;background:#e8e8e8"></div>
<div class="btn" style="left:1215px;top:731px;width:82px;height:32px"></div>
<div class="t" style="left:1242px;top:737px;color:#333">清空</div>
<div class="a" style="left:1317px;top:731px;width:82px;height:32px;border-radius:4px;background:#0a66ff"></div>
<div class="t" style="left:1344px;top:737px;color:#fff">邀请</div>

<!-- annotation border -->
<div class="a" style="left:653px;top:246px;width:762px;height:526px;border:2px solid #3f78b8"></div>

<!-- arrow -->
<svg class="a" style="left:0;top:0" width="1920" height="880" viewBox="0 0 1920 880">
<path d="M474 213 Q492 402 643 501" fill="none" stroke="#0b6fc6" stroke-width="2"/>
<path d="M654 508.5 L636.5 506.5 L645 493.5 Z" fill="#0b6fc6"/>
</svg>
<!-- yellow highlight -->
<div class="a" style="left:447px;top:180px;width:48px;height:48px;border-radius:50%;background:rgba(250,248,0,0.58)"></div>
<!-- cursor -->
<svg class="a" style="left:463px;top:193px" width="18" height="24" viewBox="0 0 18 24">
<defs><linearGradient id="hg" x1="0" y1="0" x2="0" y2="1"><stop offset="0.5" stop-color="#fff"/><stop offset="1" stop-color="#d8d8d8"/></linearGradient></defs>
<path d="M4 2.5 C4 1.3 4.6 0.8 5.7 0.8 C6.8 0.8 7.4 1.3 7.4 2.5 L7.4 7.5 C7.6 6.6 8.2 6.3 8.9 6.3 C9.6 6.3 10.1 6.8 10.2 7.6 C10.4 7 11 6.8 11.6 6.8 C12.3 6.8 12.8 7.3 12.9 8.2 C13.2 7.8 13.7 7.7 14.1 7.7 C14.9 7.7 15.5 8.3 15.5 9.2 L15.5 15.5 C15.5 17.2 14.8 18.5 14.2 19.5 L14.2 22 L4.8 22 L4.8 20.5 C3.5 18.8 1.5 15.8 0.6 14 C0.1 13 0.5 12 1.5 11.7 C2.4 11.5 3.2 12 4 13.2 Z" fill="url(#hg)" stroke="#111" stroke-width="1.3" stroke-linejoin="round"/>
<path d="M7.4 7.5 L7.4 11 M10.2 7.6 L10.2 11 M12.9 8.2 L12.9 11" stroke="#111" stroke-width="1"/>
</svg>
</body></html>
